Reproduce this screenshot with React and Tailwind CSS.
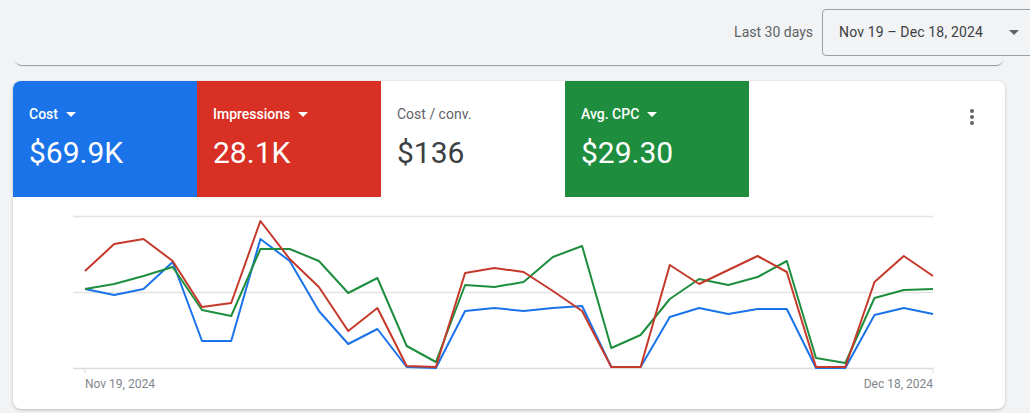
import React from "react";

const xs = Array.from({ length: 30 }, (_, i) => 85 + (848 / 29) * i);

const red = [271, 244, 239, 261, 307, 303, 221, 259, 287, 331, 308, 366, 367, 273, 268, 272, 291, 311, 367, 367, 265, 284, 270, 256, 272, 367, 367, 282, 256, 276];
const green = [289, 284, 276, 267, 310, 316, 249, 249, 261, 293, 278, 346, 362, 285, 287, 282, 257, 246, 348, 335, 299, 279, 285, 277, 261, 358, 363, 298, 290, 289];
const blue = [289, 295, 289, 262, 341, 341, 239, 261, 311, 344, 329, 367, 368, 311, 308, 311, 308, 306, 367, 367, 317, 308, 314, 309, 309, 368, 368, 315, 308, 314];

// chart svg starts at page x=13, y=197
const toPoints = (ys) => ys.map((y, i) => `${(xs[i] - 13).toFixed(1)},${y - 197}`).join(" ");

const metrics = [
  { label: "Cost", value: "$69.9K", bg: "bg-[#1a73e8]", active: true },
  { label: "Impressions", value: "28.1K", bg: "bg-[#d93025]", active: true },
  { label: "Cost / conv.", value: "$136", bg: "bg-white", active: false },
  { label: "Avg. CPC", value: "$29.30", bg: "bg-[#1e8e3e]", active: true },
];

const Caret = ({ className }) => (
  <svg width="10" height="5" viewBox="0 0 10 5" className={className}>
    <path d="M0 0 L10 0 L5 5 Z" fill="currentColor" />
  </svg>
);

const MetricTile = ({ metric }) => (
  <div className={`${metric.bg} w-[184px] h-[116px] pl-4 pt-[23px] ${metric.active ? "text-white" : "text-[#3c4043]"}`}>
    <div className={`flex items-center text-[14px] leading-5 ${metric.active ? "font-medium" : "text-[#5f6368]"}`}>
      <span>{metric.label}</span>
      {metric.active && <Caret className="ml-[8px] mt-[1px]" />}
    </div>
    <div className="mt-[11px] text-[30px] leading-9">{metric.value}</div>
  </div>
);

export default function App() {
  return (
    <div
      className="w-[1030px] h-[413px] bg-[#f1f3f4] overflow-hidden"
      style={{ fontFamily: "Roboto, 'Liberation Sans', sans-serif" }}
    >
      {/* top bar */}
      <div className="ml-[14px] w-[990px] h-[65px] rounded-b-[8px] shadow-[0_2px_1px_-1px_rgba(60,64,67,0.5)] flex items-center justify-end">
        <span className="text-[14px] text-[#5f6368] mr-[9px]">Last 30 days</span>
        <div className="w-[220px] h-[47px] -mr-[38px] border border-[#9aa0a6] rounded-[4px] flex items-center pl-4 text-[14px] text-[#3c4043]">
          <span className="tracking-[0.15px]">Nov 19 – Dec 18, 2024</span>
          <Caret className="ml-[26px] text-[#5f6368]" />
        </div>
      </div>

      {/* main card */}
      <div className="mt-4 ml-[13px] w-[992px] h-[328px] bg-white rounded-[8px] shadow-[0_1px_3px_rgba(60,64,67,0.3)] overflow-hidden">
        <div className="flex">
          {metrics.map((m) => (
            <MetricTile key={m.label} metric={m} />
          ))}
          <div className="flex-1 flex justify-end pt-6 pr-[21px]">
            <svg width="24" height="24" viewBox="0 0 24 24" className="text-[#5f6368]">
              <circle cx="12" cy="6" r="2" fill="currentColor" />
              <circle cx="12" cy="12" r="2" fill="currentColor" />
              <circle cx="12" cy="18" r="2" fill="currentColor" />
            </svg>
          </div>
        </div>

        <svg width="992" height="178" viewBox="0 0 992 178" className="block">
          <line x1="60" y1="19.5" x2="920" y2="19.5" stroke="#e3e3e3" strokeWidth="1.5" />
          <line x1="60" y1="95.5" x2="920" y2="95.5" stroke="#e3e3e3" strokeWidth="1.5" />
          <line x1="60" y1="171.5" x2="920" y2="171.5" stroke="#dadce0" strokeWidth="1.5" />
          <line x1="72" y1="171" x2="72" y2="176" stroke="#dadce0" strokeWidth="1" />
          <line x1="920" y1="171" x2="920" y2="176" stroke="#dadce0" strokeWidth="1" />
          <polyline points={toPoints(blue)} fill="none" stroke="#1a73e8" strokeWidth="2" strokeLinejoin="round" />
          <polyline points={toPoints(green)} fill="none" stroke="#1e8e3e" strokeWidth="2" strokeLinejoin="round" />
          <polyline points={toPoints(red)} fill="none" stroke="#c5392b" strokeWidth="2" strokeLinejoin="round" />
        </svg>

        <div className="flex justify-between pl-[72px] pr-[72px] pt-[1px] text-[12px] leading-4 text-[#80868b]">
          <span>Nov 19, 2024</span>
          <span>Dec 18, 2024</span>
        </div>
      </div>
    </div>
  );
}
